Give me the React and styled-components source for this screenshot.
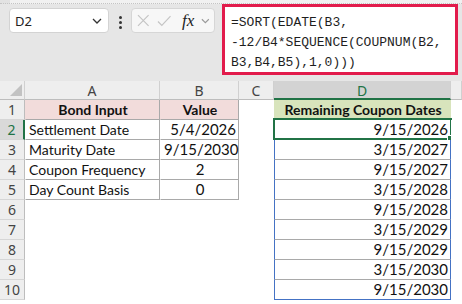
import React from "react";
import styled, { createGlobalStyle } from "styled-components";

const Global = createGlobalStyle`
  html, body { margin: 0; padding: 0; background: #ffffff; }
  #root { width: 462px; height: 304px; overflow: hidden; }
`;

const Page = styled.div`
  width: 462px;
  height: 304px;
  display: flex;
  flex-direction: column;
  background: #ffffff;
`;

const TopStrip = styled.div`
  height: 3px;
  flex: none;
  background: linear-gradient(to right, #e2e2e2 0 10px, #f1f1f1 10px);
  border-bottom: 1px dotted #c4c4c4;
`;

const FormulaBar = styled.div`
  height: 77px;
  flex: none;
  background: #e6e6e6;
  display: flex;
  align-items: flex-start;
  box-sizing: border-box;
`;

const NameBox = styled.div`
  margin: 4px 0 0 9px;
  width: 100px;
  height: 25px;
  box-sizing: border-box;
  background: #ffffff;
  border: 1px solid #d3d3d3;
  border-radius: 4px;
  display: flex;
  align-items: center;
  justify-content: space-between;
  padding: 0 6px 0 5px;
  font: 400 13px "Noto Sans", "Open Sans", sans-serif;
  color: #222;
`;

const Dots = styled.div`
  margin: 12px 0 0 0;
  width: 22px;
  display: flex;
  flex-direction: column;
  align-items: center;
  gap: 2px;
  span {
    width: 3px;
    height: 3px;
    border-radius: 50%;
    background: #333;
  }
`;

const FxBox = styled.div`
  margin-top: 4px;
  width: 84px;
  height: 25px;
  box-sizing: border-box;
  background: #f7f7f7;
  border: 1px solid #d6d6d6;
  border-radius: 4px;
  display: flex;
  align-items: center;
  padding: 0 4px 0 5px;
  gap: 7px;
`;

const FxText = styled.span`
  font: italic 400 17px "Liberation Serif", "DejaVu Serif", serif;
  color: #222;
  margin-left: 4px;
  letter-spacing: 0px;
`;

const FormulaBox = styled.div`
  margin-left: 7px;
  width: 236px;
  height: 71px;
  box-sizing: border-box;
  border: 3px solid #e21c4c;
  background: #ffffff;
  padding: 6px 0 0 6px;
  font: 400 13px "Liberation Mono", "DejaVu Sans Mono", monospace;
  line-height: 20px;
  color: #1e1e1e;
  white-space: pre;
`;

const Grid = styled.div`
  display: grid;
  grid-template-columns: 25px 135px 79px 35px 177px 1fr;
  grid-auto-rows: 20px;
  grid-template-rows: 19px;
  font: 400 14px Lato, "Noto Sans", sans-serif;
  color: #111;
`;

const Corner = styled.div`
  position: relative;
  background: #eeeeee;
  border-right: 1px solid #d0d0d0;
  border-bottom: 1px solid #bdbdbd;
  box-sizing: border-box;
  &::after {
    content: "";
    position: absolute;
    right: 2px;
    bottom: 3px;
    width: 0;
    height: 0;
    border-left: 12px solid transparent;
    border-bottom: 12px solid #c2c2c2;
  }
`;

const ColHeader = styled.div`
  box-sizing: border-box;
  background: ${(p) => (p.$sel ? "#d3d3d3" : "#eeeeee")};
  color: ${(p) => (p.$sel ? "#217346" : "#444")};
  border-right: 1px solid #d0d0d0;
  border-bottom: ${(p) => (p.$sel ? "2px solid #217346" : "1px solid #bdbdbd")};
  font: 400 14px "Noto Sans", "Open Sans", sans-serif;
  display: flex;
  align-items: center;
  justify-content: center;
  padding-top: ${(p) => (p.$sel ? "1px" : "0")};
`;

const RowHeader = styled.div`
  box-sizing: border-box;
  background: ${(p) => (p.$sel ? "#d9d9d9" : "#eeeeee")};
  color: ${(p) => (p.$sel ? "#217346" : "#444")};
  border-right: ${(p) => (p.$sel ? "2px solid #217346" : "1px solid #bdbdbd")};
  border-bottom: 1px solid #d6d6d6;
  font: 400 14px "Noto Sans", "Open Sans", sans-serif;
  display: flex;
  align-items: center;
  justify-content: center;
`;

const Cell = styled.div`
  position: relative;
  box-sizing: border-box;
  background: ${(p) => p.$bg || "#ffffff"};
  border-left: 1px solid ${(p) => p.$l || "transparent"};
  border-right: 1px solid ${(p) => p.$r || "transparent"};
  border-bottom: 1px solid ${(p) => p.$b || "transparent"};
  font-weight: ${(p) => (p.$bold ? 700 : 400)};
  font-size: ${(p) => (p.$num ? "15px" : "14px")};
  text-align: ${(p) => p.$align || "left"};
  padding: 0 2px 0 3px;
  line-height: 19px;
  white-space: nowrap;
  overflow: visible;
`;

const Selection = styled.div`
  position: absolute;
  left: -2px;
  right: -2px;
  top: -2px;
  bottom: -1px;
  border: 2px solid #217346;
  pointer-events: none;
  &::after {
    content: "";
    position: absolute;
    right: -4px;
    bottom: -4px;
    width: 5px;
    height: 5px;
    background: #217346;
    border: 1px solid #ffffff;
  }
`;

const GRAY = "#a9a9a9";
const BLUE = "#4472c4";

const inputs = [
  ["Settlement Date", "5/4/2026", "right"],
  ["Maturity Date", "9/15/2030", "right"],
  ["Coupon Frequency", "2", "center"],
  ["Day Count Basis", "0", "center"],
];

const dates = [
  "9/15/2026",
  "3/15/2027",
  "9/15/2027",
  "3/15/2028",
  "9/15/2028",
  "3/15/2029",
  "9/15/2029",
  "3/15/2030",
  "9/15/2030",
];

function XIcon() {
  return (
    <svg width="13" height="13" viewBox="0 0 13 13">
      <path d="M1 1 L12 12 M12 1 L1 12" stroke="#c4c4c4" strokeWidth="1.2" fill="none" />
    </svg>
  );
}

function CheckIcon() {
  return (
    <svg width="15" height="12" viewBox="0 0 15 12">
      <path d="M1 6.5 L5 10.5 L14 1" stroke="#c4c4c4" strokeWidth="1.2" fill="none" />
    </svg>
  );
}

function Chevron({ color = "#333", w = 10 }) {
  return (
    <svg width={w} height="6" viewBox="0 0 10 6">
      <path d="M1 1 L5 5 L9 1" stroke={color} strokeWidth="1.3" fill="none" />
    </svg>
  );
}

export default function App() {
  const rows = [];
  rows.push(
    <React.Fragment key="r1">
      <RowHeader>1</RowHeader>
      <Cell $bg="#f2dcdb" $bold $align="center" $r={GRAY} $b={GRAY}>Bond Input</Cell>
      <Cell $bg="#f2dcdb" $bold $align="center" $r={GRAY} $b={GRAY}>Value</Cell>
      <Cell />
      <Cell $bg="#d8e4bc" $bold $align="center">Remaining Coupon Dates</Cell>
      <Cell />
    </React.Fragment>
  );
  for (let i = 0; i < 9; i++) {
    const n = i + 2;
    const inp = inputs[i];
    rows.push(
      <React.Fragment key={"r" + n}>
        <RowHeader $sel={n === 2}>{n}</RowHeader>
        {inp ? (
          <>
            <Cell $r={GRAY} $b={GRAY}>{inp[0]}</Cell>
            <Cell $r={GRAY} $b={GRAY} $num $align={inp[2]}>{inp[1]}</Cell>
          </>
        ) : (
          <>
            <Cell />
            <Cell />
          </>
        )}
        <Cell />
        <Cell $num $align="right" $l={BLUE} $r={BLUE} $b={n === 10 ? BLUE : GRAY}>
          {dates[i]}
          {n === 2 && <Selection />}
        </Cell>
        <Cell />
      </React.Fragment>
    );
  }

  return (
    <Page>
      <Global />
      <TopStrip />
      <FormulaBar>
        <NameBox>
          <span>D2</span>
          <Chevron />
        </NameBox>
        <Dots>
          <span />
          <span />
          <span />
        </Dots>
        <FxBox>
          <XIcon />
          <CheckIcon />
          <FxText>fx</FxText>
          <Chevron color="#9a9a9a" w={9} />
        </FxBox>
        <FormulaBox>{"=SORT(EDATE(B3,\n-12/B4*SEQUENCE(COUPNUM(B2,\nB3,B4,B5),1,0)))"}</FormulaBox>
      </FormulaBar>
      <Grid>
        <Corner />
        <ColHeader>A</ColHeader>
        <ColHeader>B</ColHeader>
        <ColHeader>C</ColHeader>
        <ColHeader $sel>D</ColHeader>
        <ColHeader />
        {rows}
      </Grid>
    </Page>
  );
}
